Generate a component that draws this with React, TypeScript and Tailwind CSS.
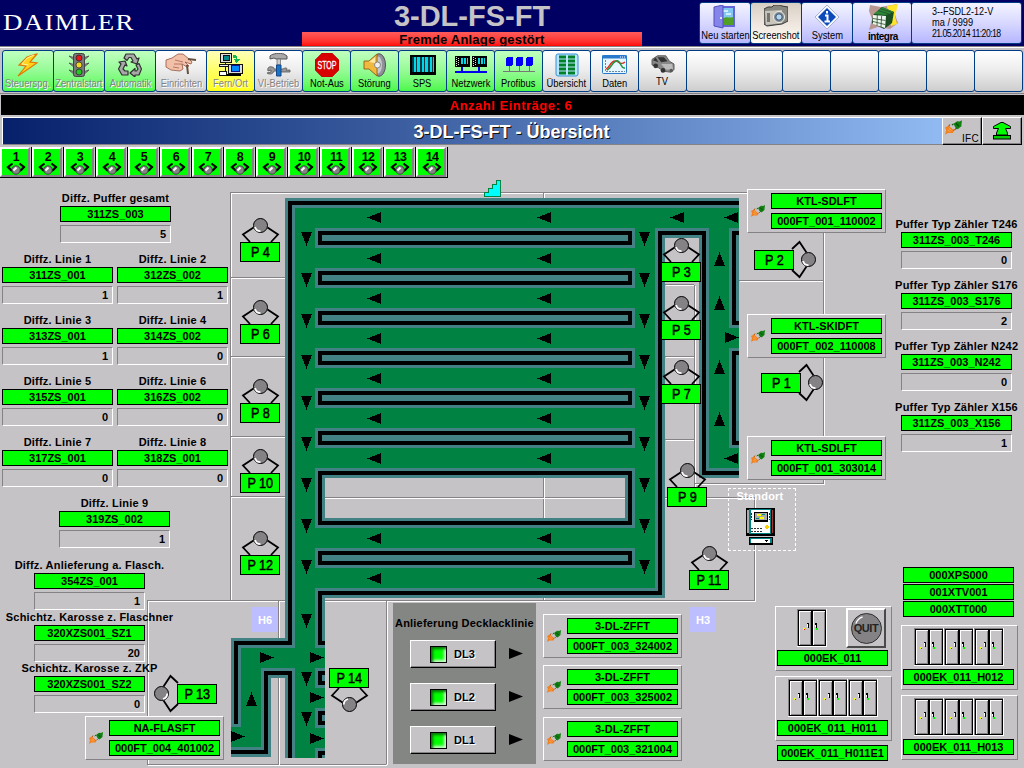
import React from "react";

const FONT = "font-['Liberation_Sans',Arial,sans-serif]";

/* ---------- small building blocks ---------- */

function Tag({ children, className = "" }: { children: React.ReactNode; className?: string }) {
  return (
    <div
      className={`h-4 w-[111px] shrink-0 whitespace-nowrap border border-black bg-[#00ff00] text-center text-[11px] font-bold leading-[14px] text-black ${className}`}
    >
      {children}
    </div>
  );
}

function Counter({ label, tag, value }: { label: string; tag: string; value: string }) {
  return (
    <div className="flex w-[111px] flex-col items-center">
      <div className="h-3.5 whitespace-nowrap text-[11px] font-bold leading-[12px] tracking-[0.2px]">{label}</div>
      <Tag>{tag}</Tag>
      <div className="mt-[3px] h-[18px] w-[111px] border border-b-white border-l-[#848284] border-r-white border-t-[#848284] pr-1 text-right text-[11px] font-bold leading-[17px]">
        {value}
      </div>
    </div>
  );
}

function Plug({ className = "h-3 w-3.5" }: { className?: string }) {
  return (
    <svg viewBox="0 0 14 12" className={className}>
      <path d="M0 12L1 8L0 6L3 4.5L7.5 8.5L6.5 10.5L2.5 10.5Z" fill="#f08020" />
      <path d="M3 5L4 3.5M7 8.5L8 7.5" stroke="#b85000" />
      <path d="M2 8L4.5 9.5M3 6.5L5.5 8.5" stroke="#ffb060" strokeWidth="0.7" />
      <path d="M7 3L10 0.8L12 1L14 0L13.5 4L13.5 5L10.5 7.5L8.5 6Z" fill="#108010" />
      <path d="M7 3L5.7 4M9.5 6.5L8.5 7.5M9 2.5L11.5 5" stroke="#064806" strokeWidth="0.9" />
    </svg>
  );
}

function LinkPanel({ name, code, className }: { name: string; code: string; className: string }) {
  return (
    <div
      className={`absolute flex h-11 w-[139px] items-center border border-b-[#848284] border-l-white border-r-[#848284] border-t-white bg-[#c6c3c6] pl-[3px] ${className}`}
    >
      <Plug />
      <div className="ml-1.5 flex flex-col gap-1">
        <Tag>{name}</Tag>
        <Tag>{code}</Tag>
      </div>
    </div>
  );
}

function Cabinet() {
  return (
    <svg viewBox="0 0 30 38" className="h-[38px] w-[30px]" shapeRendering="crispEdges">
      <rect width="30" height="38" fill="#fff" />
      <rect width="29" height="37" fill="#848284" />
      <rect x="1" y="1" width="28" height="36" fill="#000" />
      <rect x="2" y="2" width="12" height="34" fill="#fff" />
      <rect x="3" y="3" width="11" height="33" fill="#848284" />
      <rect x="3" y="3" width="10" height="32" fill="#c6c3c6" />
      <rect x="16" y="2" width="12" height="34" fill="#fff" />
      <rect x="17" y="3" width="11" height="33" fill="#848284" />
      <rect x="17" y="3" width="10" height="32" fill="#c6c3c6" />
      <path d="M10 14H12V19H11V15H10zM18 14H20V19H19V16H18z" fill="#000" />
      <path d="M10.5 15V18M18.5 16V18" stroke="#fff" />
      <rect x="6" y="19" width="2" height="2" fill="#ff0" />
      <rect x="7" y="20" width="1" height="1" fill="#f00" />
      <rect x="19" y="19" width="2" height="2" fill="#0f0" />
    </svg>
  );
}

function CabinetPanel({ count, name, className, quit }: { count: number; name: string; className: string; quit?: boolean }) {
  return (
    <div
      className={`absolute flex h-[65px] w-[117px] flex-col border border-b-[#848284] border-l-white border-r-[#848284] border-t-white pl-px ${className}`}
    >
      <div className={quit ? "flex h-[43px] items-start pl-5 pt-0.5" : "flex h-[43px] items-start pl-[11px] pt-0.5"}>
        {Array.from({ length: count }, (_, i) => (
          <Cabinet key={i} />
        ))}
        {quit && (
          <div className="-mt-px ml-[19px] flex size-10 items-center justify-center border-2 border-b-[#4a4a4a] border-l-white border-r-[#4a4a4a] border-t-white">
            <div className="relative flex size-[31px] items-center justify-center rounded-full border border-[#303030] bg-[#848284]">
              <svg viewBox="0 0 30 30" className="absolute inset-0 size-[29px]">
                <path d="M4 10C5 7 8 4 11 3" fill="none" stroke="#fff" strokeWidth="1.3" />
              </svg>
              <span className="text-[11px] font-bold leading-none tracking-[-0.4px] text-[#222]">QUIT</span>
            </div>
          </div>
        )}
      </div>
      <Tag>{name}</Tag>
    </div>
  );
}

/* ---------- header and toolbar icons ---------- */

const icons: Record<string, React.ReactNode> = {
  bolt: (
    <>
      <path d="M20 1L11 4L3 12L10 13L2 23L21 10L14 9L21 1Z" fill="#ffd21c" stroke="#e07808" strokeWidth="1.2" />
      <path d="M18 2L11 5L6 11L12 12" fill="none" stroke="#fff59a" />
    </>
  ),
  traffic: (
    <>
      <path d="M2 3L8 5V8ZM22 3L16 5V8ZM2 10L8 12V15ZM22 10L16 12V15ZM2 17L8 19V22ZM22 17L16 19V22Z" fill="#999" stroke="#555" strokeWidth=".9" />
      <rect x="6.5" y="0.5" width="11" height="23" rx="2" fill="#787878" stroke="#444" />
      <circle cx="12" cy="5" r="3" fill="#e81818" stroke="#222" strokeWidth=".7" />
      <circle cx="12" cy="12" r="3" fill="#f0d820" stroke="#222" strokeWidth=".7" />
      <circle cx="12" cy="19" r="3" fill="#20c820" stroke="#222" strokeWidth=".7" />
    </>
  ),
  recycle: (
    <g fill="#a8a8a8" stroke="#303030" strokeWidth="1.2" strokeLinejoin="round">
      <path d="M6 5L8 1H16L19 6L21 5L19 11L13 9L15 8L13 4.5H11L9 7.5Z" />
      <path d="M1 9L7 8L9 13L7 12L5 16L7 18H10V22H4L0.5 16L3 11Z" />
      <path d="M18 12L21 10.5L23.5 16L21 22H17V24L12 20L17 15.5V18H18.5L20 16Z" />
    </g>
  ),
  hand: (
    <>
      <path d="M0 7L6 5L12 1L17 1L23 6L26 9L25 11L19 9L23 13L21 14L16 11L17 16L14 18L5 17L0 14Z" fill="#f2bfa8" stroke="#945540" strokeWidth=".8" />
      <path d="M9 7L17 9M8 11L16 11M7 14L13 15" stroke="#a66450" strokeWidth=".8" />
      <path d="M22 6L30 7M21 12L22 21" stroke="#64503c" strokeWidth="2" />
    </>
  ),
  remote: (
    <g shapeRendering="crispEdges">
      <rect x="1" y="0" width="12" height="9" fill="#ddd" stroke="#000" />
      <rect x="4" y="2" width="6" height="5" fill="#008888" stroke="#000" />
      <path d="M6 10V20H2M6 14H12" fill="none" stroke="#000" />
      <rect x="0" y="11" width="12" height="3" fill="#eee" stroke="#000" />
      <rect x="0" y="19" width="7" height="4" fill="#fff" stroke="#000" />
      <rect x="9" y="11" width="15" height="10" fill="#ddd" stroke="#000" />
      <rect x="12" y="13" width="9" height="6" fill="#08f" stroke="#008" />
      <path d="M8 23H23" stroke="#000" strokeWidth="2" />
      <path d="M14 1L19 2V6H22L18 10L15 6H17V4H14Z" fill="#10b850" />
    </g>
  ),
  tools: (
    <>
      <path d="M1 18C0 15 2 13 5 14C7 14 7 15 7 16H16C19 14 21 15 19 17H23V19H14V18H7C6 21 3 22 0 20L4 19V17Z" fill="#999" stroke="#555" strokeWidth=".8" />
      <path d="M3 3C6 0 13 0 17 1L20 3V6H15L13 6H9L7 5L3 6Z" fill="#aaa" stroke="#555" />
      <path d="M10 6H13.5V12H10Z" fill="#ccc" stroke="#666" strokeWidth=".7" />
      <path d="M9.5 12H14V23H9.5Z" fill="#1974c8" stroke="#174888" />
    </>
  ),
  stop: (
    <>
      <path d="M7 0H17L24 7V17L17 24H7L0 17V7Z" fill="#d80000" stroke="#a00000" strokeWidth=".5" />
      <text x="12" y="15.7" textAnchor="middle" fontSize="10.5" fill="#fff" stroke="#fff" strokeWidth=".3" textLength="19" lengthAdjust="spacingAndGlyphs">STOP</text>
    </>
  ),
  speaker: (
    <>
      <ellipse cx="16" cy="12" rx="6.5" ry="11.3" fill="#909098" stroke="#505058" />
      <ellipse cx="15" cy="12" rx="4" ry="8.5" fill="#c6c8d0" />
      <path d="M1 8H6L14 1V23L6 16H1Z" fill="#f0b93e" stroke="#9a661c" />
      <path d="M6 9L12 4V10" fill="#ffe8a0" />
      <circle cx="14.5" cy="12" r="3" fill="#eee" stroke="#888" />
    </>
  ),
  plc: (
    <g shapeRendering="crispEdges">
      <rect x="0" y="1" width="26" height="20" fill="#000" />
      <rect x="2" y="3" width="22" height="15" fill="#00d8e8" />
      <path d="M2.5 3V18M6.5 3V18M10.5 3V18M14.5 3V18M18.5 3V18M22.5 3V18" stroke="#003840" />
      <path d="M3.5 3V18M11.5 3V18M19.5 3V18" stroke="#003840" />
    </g>
  ),
  network: (
    <g shapeRendering="crispEdges">
      <path d="M0 1H15V12H0ZM17 1H32V12H17Z" fill="#000" />
      <path d="M6 3H13V9H6ZM23 3H30V9H23Z" fill="#00d8e8" />
      <path d="M1.5 2V11M3.5 3V11M18.5 2V11M20.5 3V11" stroke="#ddd" strokeDasharray="1 1" />
      <path d="M8.5 3V9M11.5 3V9M25.5 3V9M28.5 3V9" stroke="#000" />
      <path d="M0 17H32M7 12V17M24 12V17" stroke="#0000f0" strokeWidth="2" />
    </g>
  ),
  profibus: (
    <g shapeRendering="crispEdges">
      <path d="M3 3L5 2H10V9L8 11H3ZM13 3L15 2H20V9L18 11H13ZM23 3L25 2H30V9L28 11H23Z" fill="#0000f8" />
      <path d="M6.5 11V16M16.5 11V16M26.5 11V16M0 16.5H32" stroke="#777" />
    </g>
  ),
  overview: (
    <>
      <rect x="1" y="1" width="22" height="22" rx="2" fill="#b9e5ff" stroke="#3090d8" />
      <path d="M4 4H11M4 8H11M4 12H11M4 16H11M4 20H11M13 4H20M13 8H20M13 12H20M13 16H20M13 20H20" stroke="#008028" strokeWidth="2.9" />
    </>
  ),
  chart: (
    <>
      <rect x="0.5" y="1.5" width="24" height="18" rx="1" fill="#e7f5ff" stroke="#2878cc" />
      <path d="M0 3H25" stroke="#2878cc" strokeWidth="3" />
      <path d="M18 3H23" stroke="#fff" strokeDasharray="1 1" />
      <path d="M3.5 6V17.5H23" fill="none" stroke="#6688a0" strokeDasharray="2 1" />
      <path d="M4 15C8 14 8 7 13 7S18 12 23 8" fill="none" stroke="#df3022" strokeWidth="1.5" />
      <path d="M5 16C9 15 9 9 14 7S18 15 23 14" fill="none" stroke="#20943f" strokeWidth="1.5" />
    </>
  ),
  car: (
    <>
      <path d="M1 6L7 2L16 2L20 8L25 11V17L22 20L14 19L8 15L1 12Z" fill="#888" stroke="#555" />
      <path d="M7 3.5L14 3.5L18 8L11 9ZM2 7L5 4L8 9Z" fill="#333" />
      <path d="M11 11L23 11L24 17L16 17Z" fill="#bbb" />
      <circle cx="5" cy="13" r="2.6" fill="#333" />
      <circle cx="13" cy="18" r="2.6" fill="#333" />
      <circle cx="22" cy="18" r="1.8" fill="#555" />
    </>
  ),
  door: (
    <>
      <rect x="8" y="2" width="13" height="19" fill="#80c8f0" stroke="#6466d8" strokeWidth="2" />
      <path d="M10 6H15M13 9H18" stroke="#e8f8ff" strokeWidth="1.5" />
      <path d="M9 14C14 10 16 14 20 12V20H9Z" fill="#50a028" />
      <path d="M1 2L10 0V23L1 21Z" fill="#8484ea" stroke="#5050bd" />
      <circle cx="8" cy="13" r="1" fill="#fff" />
    </>
  ),
  camera: (
    <>
      <path d="M0 4L4 2H8L10 0H16L18 1L24 2V16L18 19L3 21L0 19Z" fill="#888880" stroke="#38383a" />
      <path d="M1 6L18 5V18L2 20Z" fill="#c7c5bc" />
      <circle cx="15" cy="12" r="5.5" fill="#888" stroke="#eee" />
      <circle cx="15" cy="12" r="3.2" fill="#b8d4e8" stroke="#28557d" />
      <rect x="3" y="8" width="3" height="9" fill="#77736d" />
    </>
  ),
  info: (
    <>
      <path d="M12 0L24 12L12 24L0 12Z" fill="#f5f7ff" stroke="#aab5cc" />
      <path d="M12 3L21 12L12 21L3 12Z" fill="#0c49b9" />
      <path d="M12 6V8.5M10 10.5H12.5V16M9.5 16.5H15" fill="none" stroke="#fff" strokeWidth="2" />
    </>
  ),
  cube: (
    <>
      <path d="M1 1L12 3L28 0L25 8L29 19L21 25L9 23L0 26L3 15L0 7Z" fill="#b99790" />
      <path d="M18 2L29 0L26 12L28 20L22 22Z" fill="#ffe42a" />
      <path d="M4 11L13 3L25 8L23 19L15 25L3 19Z" fill="#174f20" />
      <path d="M4 11L17 12L16 24L4 20Z" fill="#eef4ee" />
      <path d="M5 10L13 3L25 8L17 11Z" fill="#2c8738" />
      <path d="M8.3 11L8 21.5M12.6 12L12 23M4 14.5L16.5 16.5M4 17.5L16 20.5M9 6.5L20 10M11 4.5L23 8.5M20 10L19 22M17 16L24 12" stroke="#244e2a" strokeWidth=".8" />
    </>
  ),
};

type Tone = "green" | "gray" | "yellow" | "lavender" | "beige";

const tones: Record<Tone, string> = {
  green: "bg-linear-to-b from-[#c0ffc0] via-[#94fb94] to-[#48f848]",
  gray: "bg-linear-to-b from-[#ffffff] via-[#ececec] to-[#cecece]",
  yellow: "bg-linear-to-b from-[#ffffb8] via-[#ffff60] to-[#ffff10]",
  lavender: "bg-linear-to-b from-[#f4f4ff] via-[#d8d8ff] to-[#b6b6ff]",
  beige: "bg-linear-to-b from-[#d8cec4] via-[#eee6de] to-[#fffaf4]",
};

function ToolButton({
  label = "",
  icon,
  box = "0 0 24 24",
  tone = "gray",
  disabled,
  size = "w-12",
  iconSize = "size-6",
}: {
  label?: string;
  icon?: string;
  box?: string;
  tone?: Tone;
  disabled?: boolean;
  size?: string;
  iconSize?: string;
}) {
  return (
    <button
      className={`-mr-px flex h-[42px] shrink-0 flex-col items-center rounded-[3px] border border-[#003c84] pt-0.5 ${size} ${tones[tone]}`}
    >
      {icon && (
        <svg viewBox={box} className={`shrink-0 ${iconSize}`}>
          {icons[icon]}
        </svg>
      )}
      {label && (
        <span
          className={`scale-x-[0.85] whitespace-nowrap text-[11px] leading-3 ${
            disabled ? "text-[#848284] [text-shadow:1px_1px_0_#fff]" : "text-black"
          }`}
        >
          {label}
        </span>
      )}
    </button>
  );
}

/* ---------- plant diagram ---------- */

const TEAL = "#428284";
const GREEN = "#008242";
const GREY = "#c6c3c6";

function Arrow({ x, y, dir }: { x: number; y: number; dir: "l" | "r" | "u" | "d" }) {
  const pts = {
    l: `${x},${y + 5.5} ${x + 14},${y} ${x + 14},${y + 11}`,
    r: `${x},${y} ${x},${y + 11} ${x + 14},${y + 5.5}`,
    u: `${x},${y + 14} ${x + 5.5},${y} ${x + 11},${y + 14}`,
    d: `${x},${y} ${x + 11},${y} ${x + 5.5},${y + 14}`,
  }[dir];
  return <polygon points={pts} fill="#000" />;
}

function Island({ y }: { y: number }) {
  return (
    <g>
      <rect x="315" y={y} width="320" height="20" fill={TEAL} />
      <rect x="320" y={y + 5} width="310" height="10" fill="none" stroke="#000" strokeWidth="4" />
    </g>
  );
}

/* Three-layer wall: teal edge, black core. */
function Wall({ d }: { d: string }) {
  return (
    <>
      <path d={d} fill="none" stroke={TEAL} strokeWidth="10" />
      <path d={d} fill="none" stroke="#000" strokeWidth="4" />
    </>
  );
}

function Worker({ x, y, turn, shine }: { x: number; y: number; turn: number; shine: number }) {
  return (
    <g transform={`translate(${x} ${y})`}>
      <g transform={`rotate(${turn})`}>
        <path d="M7 2L17.5 9L10.5 16.5M-7 2L-17.5 9L-10.5 16.5" fill="none" stroke="#000" strokeWidth="1.8" />
      </g>
      <circle r="7" fill="#848284" stroke="#000" />
      <path d="M-5.5 1.5A5.7 5.7 0 0 0 0 5.7" transform={`rotate(${shine})`} fill="none" stroke="#fff" strokeWidth="1.8" />
    </g>
  );
}

const frameLines = [
  "M230 192.5H747M230 277.5H286M230 356.5H286M230 436.5H286M230 496.5H286M147 600.5H755",
  "M230.5 192V600M147.5 600V764M147 764.5H386M278.5 600V764M386.5 601V764M543.5 192V600M754.5 498V601M325 497.5H755",
  "M739 280.5H824M823.5 232V483M695 483.5H824M694.5 285V497M665 284.5H694M665 356.5H694M665 439.5H694",
];

function Diagram() {
  return (
    <svg viewBox="0 178 1024 590" className="absolute inset-0 h-[590px] w-[1024px]">
      <g fill="none" shapeRendering="crispEdges">
        {frameLines.map((d, i) => (
          <path key={`w${i}`} d={d} stroke="#fff" transform="translate(1 1)" />
        ))}
        {frameLines.map((d, i) => (
          <path key={`g${i}`} d={d} stroke="#848284" />
        ))}
      </g>

      <g shapeRendering="crispEdges">
        <path d="M290 203H739V478H704V233H660V593H320V758H290V738H266V752H231V643H290Z" fill={GREEN} />
        <rect x="271" y="678" width="14" height="82" fill={GREY} />
        <path d="M278.5 678V764" stroke="#848284" />
        <path d="M279.5 678V765" stroke="#fff" />
        <rect x="315" y="643" width="10" height="115" fill={GREEN} />
        <Wall d="M739 203H290V643H236V722" />
        <path d="M231 724H241" stroke={TEAL} strokeWidth="6" />
        <path d="M236 718V724" stroke="#000" strokeWidth="4" />
        <path d="M231 727H261V747H231Z" fill={GREEN} />
        <path d="M241 673H261V727H241Z" fill={GREEN} />
        <Wall d="M231 752H266V673H290V758" />
        <Wall d="M325 643H320V593H660V233H704V473H739" />
        <path d="M739 233H734V323H739M739 353H734V443H739" fill="none" stroke={TEAL} strokeWidth="10" />
        <path d="M739 233H734V323H739M739 353H734V443H739" fill="none" stroke="#000" strokeWidth="4" />
        {[668, 708].map((y) => (
          <g key={y}>
            <rect x="315" y={y} width="10" height="20" fill={TEAL} />
            <path d={`M325 ${y + 5}H320V${y + 15}H325`} fill="none" stroke="#000" strokeWidth="4" />
          </g>
        ))}
        <rect x="315" y="748" width="10" height="10" fill={TEAL} />
        <path d="M325 753H320V758" fill="none" stroke="#000" strokeWidth="4" />
        {[228, 268, 308, 348, 388, 428, 548].map((y) => (
          <Island key={y} y={y} />
        ))}
        <rect x="315" y="468" width="320" height="60" fill={TEAL} />
        <rect x="320" y="473" width="310" height="50" fill={GREY} stroke={TEAL} strokeWidth="10" />
        <rect x="320" y="473" width="310" height="50" fill="none" stroke="#000" strokeWidth="4" />
        <path d="M325 497.5H625M543.5 478V518" stroke="#848284" />
        <path d="M325 498.5H625M544.5 478V518" stroke="#fff" />
        {[212, 253, 293, 333, 373, 413, 453, 533, 573].map((y) => (
          <g key={y}>
            <Arrow x={367} y={y} dir="l" />
            <Arrow x={537} y={y} dir="l" />
          </g>
        ))}
        {[232, 273, 314, 355, 396, 437, 478, 519, 560].map((y) => (
          <g key={y}>
            <Arrow x={301} y={y} dir="d" />
            <Arrow x={639} y={y} dir="d" />
          </g>
        ))}
        {[614, 672, 712].map((y) => (
          <Arrow key={y} x={301} y={y} dir="d" />
        ))}
        {[252, 296, 360, 412].map((y) => (
          <Arrow key={y} x={714} y={y} dir="u" />
        ))}
        <Arrow x={670} y={212} dir="l" />
        <Arrow x={724} y={212} dir="l" />
        <Arrow x={725} y={332} dir="r" />
        <Arrow x={724} y={453} dir="l" />
        <Arrow x={260} y={652} dir="r" />
        <Arrow x={310} y={652} dir="r" />
        <Arrow x={310} y={692} dir="r" />
        <Arrow x={310} y={733} dir="r" />
        <Arrow x={231} y={731} dir="r" />
        <Arrow x={246} y={692} dir="u" />
        <path d="M484.5 196.5V192.5H488.5V188.5H492.5V184.5H496.5V180.5H500.5V196.5Z" fill="#0ff" stroke="#008242" />
      </g>

      {[
        [260.5, 225.5],
        [260.5, 307.5],
        [260.5, 386.5],
        [260.5, 456.5],
        [260.5, 538.5],
        [681.5, 245.5],
        [681.5, 303.5],
        [681.5, 367.5],
        [687.5, 470.5],
        [709.5, 553.5],
      ].map(([x, y]) => (
        <Worker key={`${x}-${y}`} x={x} y={y} turn={0} shine={0} />
      ))}
      <Worker x={808.5} y={259.5} turn={90} shine={0} />
      <Worker x={815.5} y={382.5} turn={90} shine={0} />
      <Worker x={161.5} y={693.5} turn={-90} shine={-90} />
      <Worker x={349.5} y={704.5} turn={180} shine={90} />
    </svg>
  );
}

const stations: [string, string][] = [
  ["P 4", "left-[240px] top-[64px]"],
  ["P 6", "left-[240px] top-[146px]"],
  ["P 8", "left-[240px] top-[225px]"],
  ["P 10", "left-[240px] top-[295px]"],
  ["P 12", "left-[240px] top-[377px]"],
  ["P 3", "left-[661px] top-[84px]"],
  ["P 5", "left-[661px] top-[142px]"],
  ["P 7", "left-[661px] top-[206px]"],
  ["P 9", "left-[667px] top-[309px]"],
  ["P 11", "left-[689px] top-[392px]"],
  ["P 2", "left-[754px] top-[72px]"],
  ["P 1", "left-[761px] top-[195px]"],
  ["P 13", "left-[177px] top-[506px]"],
  ["P 14", "left-[329px] top-[490px]"],
];

function Terminal() {
  return (
    <svg viewBox="0 0 29 37" className="h-[37px] w-[29px]" shapeRendering="crispEdges">
      <rect width="29" height="28" fill="#000" />
      <rect x="1" y="2" width="2" height="23" fill="#aaa" />
      <rect x="26" y="2" width="1" height="23" fill="#b03030" />
      <rect x="3" y="1" width="22" height="25" fill="#008284" />
      <rect x="5" y="2" width="19" height="23" fill="#fff" />
      <rect x="8" y="4" width="14" height="10" fill="#000" />
      <rect x="9" y="5" width="12" height="7" fill="#aaa" />
      <path d="M11 7H15M14 10H18" stroke="#ff0" strokeWidth="2" />
      <path d="M16 6.5H19M10 10.5H13" stroke="#088" />
      <path d="M5.5 5V12M23.5 5V12" stroke="#800" strokeDasharray="2 1" />
      <path d="M5 20.5H17M5 23.5H17" stroke="#333" strokeDasharray="2 1" />
      <path d="M19 19H23M21 17V21" stroke="#fc0" strokeWidth="2" />
      <rect x="3" y="29" width="24" height="8" fill="#000" />
      <rect x="4" y="30" width="22" height="5" fill="#008284" />
      <rect x="5" y="31" width="19" height="4" fill="#fff" />
      <path d="M18 32H23L20 34Z" fill="#000" />
    </svg>
  );
}

function NumberButton({ n }: { n: number }) {
  return (
    <button className="flex h-[31px] w-8 shrink-0 border-b border-r border-black bg-[#c6c3c6]">
      <span className="flex h-[30px] w-[30px] flex-col items-center border-2 border-b-[#848284] border-l-white border-r-[#848284] border-t-white bg-[#00ff00] pt-[3px] pl-0.5">
        <span className="text-[12.5px] font-bold leading-[10px] tracking-[-0.6px]">{n}</span>
        <svg viewBox="0 0 20 13" className="h-[13px] w-5 shrink-0">
          <path d="M6.5 1.5L2 5L5 8L8 9.5M13.5 1.5L18 5L15 8L12 9.5" fill="none" stroke="#000" strokeWidth="2.2" />
          <circle cx="10" cy="8" r="4.2" fill="#848284" stroke="#333" strokeWidth=".8" />
          <path d="M7.5 8.5L10.5 5.5" stroke="#fff" strokeWidth="2" />
        </svg>
      </span>
    </button>
  );
}

/* ---------- page ---------- */

export default function App() {
  return (
    <div className={`flex h-[768px] w-[1024px] flex-col overflow-hidden bg-[#c6c3c6] text-black ${FONT}`}>
      <header className="flex h-[46px] shrink-0 bg-[#000063]">
        <div className="w-[302px] pl-[3px] pt-[9px] font-['Liberation_Serif',serif] text-[24px] leading-[27px] text-white">
          <span className="inline-block origin-left scale-x-[1.12] tracking-[1.2px]">DAIMLER</span>
        </div>
        <div className="flex w-[340px] flex-col items-center">
          <h1 className="h-8 text-[29px] font-bold leading-8 text-[#c6c3c6]">3-DL-FS-FT</h1>
          <div className="h-3.5 w-full bg-linear-to-b from-[#ff5a5a] to-[#ff0000] text-center text-[13px] font-bold leading-[15px] tracking-[0.2px]">
            Fremde Anlage gestört
          </div>
        </div>
        <div className="ml-[57px] flex pt-0.5">
          <ToolButton label="Neu starten" icon="door" tone="lavender" size="w-[52px]" />
          <ToolButton label="Screenshot" icon="camera" tone="beige" size="w-[52px]" />
          <ToolButton label="System" icon="info" tone="lavender" size="w-[52px]" />
          <div className="-mr-px flex h-[42px] w-[60px] flex-col items-center rounded-[3px] border border-[#003c84] bg-linear-to-b from-[#f4f4ff] via-[#d8d8ff] to-[#b6b6ff] pl-0.5">
            <svg viewBox="0 0 29 27" className="mt-px h-[27px] w-[29px] shrink-0">
              {icons.cube}
            </svg>
            <span className="text-[10px] font-bold leading-[11px] tracking-[-0.5px]">integra</span>
          </div>
          <div className="flex h-[42px] w-[111px] flex-col items-start whitespace-nowrap rounded-[3px] border border-[#003c84] bg-linear-to-b from-[#f4f4ff] via-[#d8d8ff] to-[#b6b6ff] pl-5 pt-[3px] text-[11px] leading-[11px]">
            <span className="origin-left scale-x-[0.82]">3--FSDL2-12-V</span>
            <span className="origin-left scale-x-[0.84]">ma / 9999</span>
            <span className="origin-left scale-x-[0.79] tracking-[-0.7px]">21.05.2014 11:20:18</span>
          </div>
        </div>
      </header>

      <nav className="flex h-12 shrink-0 border-b border-t border-b-[#848284] border-t-[#848284] pl-0.5 pt-[3px] shadow-[inset_0_1px_0_#fff]">
        <ToolButton label="Steuerspg." icon="bolt" tone="green" disabled size="w-[52px]" />
        <ToolButton label="Zentralstart" icon="traffic" tone="green" disabled size="w-[52px]" />
        <ToolButton label="Automatik" icon="recycle" tone="green" disabled size="w-[52px]" />
        <ToolButton label="Einrichten" icon="hand" box="0 0 30 24" iconSize="h-6 w-[34px]" disabled size="w-[52px]" />
        <ToolButton label="Fern/Ort" icon="remote" box="-1 -1 26 26" tone="yellow" disabled size="w-[49px]" />
        <ToolButton label="VI-Betrieb" icon="tools" disabled size="w-[49px]" />
        <ToolButton label="Not-Aus" icon="stop" tone="green" size="w-[49px]" />
        <ToolButton label="Störung" icon="speaker" tone="green" size="w-[49px]" />
        <ToolButton label="SPS" icon="plc" box="0 -1 26 24" iconSize="h-6 w-[26px]" tone="green" size="w-[49px]" />
        <ToolButton label="Netzwerk" icon="network" box="0 -2 32 24" iconSize="h-6 w-8" tone="green" size="w-[49px]" />
        <ToolButton label="Profibus" icon="profibus" box="0 -2 32 24" iconSize="h-6 w-8" tone="green" size="w-[49px]" />
        <ToolButton label="Übersicht" icon="overview" size="w-[49px]" />
        <ToolButton label="Daten" icon="chart" box="0 -1 25 24" iconSize="h-6 w-[25px]" size="w-[49px]" />
        <ToolButton label="TV" icon="car" box="0 -1 26 24" iconSize="h-[22px] w-[26px]" size="w-[49px]" />
        {Array.from({ length: 7 }, (_, i) => (
          <ToolButton key={i} size="w-[49px]" />
        ))}
      </nav>

      <div className="ml-px mt-px h-5 shrink-0 bg-black pr-[3px] text-center text-[13px] font-bold leading-[21px] tracking-[0.5px] text-[#ff0000]">
        Anzahl Einträge: 6
      </div>

      <div className="mx-0.5 mt-0.5 flex h-7 shrink-0">
        <div className="flex-1 border-b border-l border-t border-b-[#848284] border-l-white border-t-white bg-linear-to-r from-[#08206b] via-[#4669aa] to-[#91baf2] pl-[78px] text-center text-[18px] font-bold leading-7 text-white [text-shadow:1px_1px_0_#101010]">
          3-DL-FS-FT - Übersicht
        </div>
        <button className="flex h-7 w-10 items-start border border-b-black border-l-white border-r-black border-t-white shadow-[inset_-1px_-1px_0_#848284]">
          <Plug className="ml-0.5 mt-0.5 h-[15px] w-[17px] shrink-0" />
          <span className="mt-[15px] text-[10px] leading-[11px] tracking-[0.3px]">IFC</span>
        </button>
        <button className="flex h-7 w-10 items-center justify-center border border-b-black border-l-white border-r-black border-t-white shadow-[inset_-1px_-1px_0_#848284]">
          <svg viewBox="0 0 20 20" className="size-5 shrink-0">
            <path d="M9 1.5H11L18.5 5.5V7.5H13.5L15.5 12V14H4.5V12L6.5 7.5H1.5V5.5Z" fill="#0f0" stroke="#000" />
            <rect x="1.5" y="14.5" width="17" height="3.5" fill="#00d000" stroke="#000" />
          </svg>
        </button>
      </div>

      <nav className="mt-0.5 flex h-[31px] shrink-0">
        {Array.from({ length: 14 }, (_, i) => (
          <NumberButton key={i} n={i + 1} />
        ))}
      </nav>

      <main className="relative flex h-[590px] w-[1024px] justify-between">
        <Diagram />

        <aside className="relative flex w-[230px] flex-col pl-0.5 pt-3.5">
          <div className="ml-[58px]">
            <Counter label="Diffz. Puffer gesamt" tag="311ZS_003" value="5" />
          </div>
          <div className="mt-2.5 grid grid-cols-[111px_111px] gap-x-1 gap-y-2.5">
            <Counter label="Diffz. Linie 1" tag="311ZS_001" value="1" />
            <Counter label="Diffz. Linie 2" tag="312ZS_002" value="1" />
            <Counter label="Diffz. Linie 3" tag="313ZS_001" value="1" />
            <Counter label="Diffz. Linie 4" tag="314ZS_002" value="0" />
            <Counter label="Diffz. Linie 5" tag="315ZS_001" value="0" />
            <Counter label="Diffz. Linie 6" tag="316ZS_002" value="0" />
            <Counter label="Diffz. Linie 7" tag="317ZS_001" value="0" />
            <Counter label="Diffz. Linie 8" tag="318ZS_001" value="0" />
          </div>
          <div className="ml-[57px] mt-2.5">
            <Counter label="Diffz. Linie 9" tag="319ZS_002" value="1" />
          </div>
          <div className="ml-8 mt-[11px]">
            <Counter label="Diffz. Anlieferung a. Flasch." tag="354ZS_001" value="1" />
          </div>
          <div className="ml-8 mt-px">
            <Counter label="Schichtz. Karosse z. Flaschner" tag="320XZS001_SZ1" value="20" />
          </div>
          <div className="ml-8">
            <Counter label="Schichtz. Karosse z. ZKP" tag="320XZS001_SZ2" value="0" />
          </div>
        </aside>

        <aside className="relative flex w-[123px] flex-col gap-2.5 pt-10">
          <Counter label="Puffer Typ Zähler T246" tag="311ZS_003_T246" value="0" />
          <Counter label="Puffer Typ Zähler S176" tag="311ZS_003_S176" value="2" />
          <Counter label="Puffer Typ Zähler N242" tag="311ZS_003_N242" value="0" />
          <Counter label="Puffer Typ Zähler X156" tag="311ZS_003_X156" value="1" />
          <div className="ml-0.5 mt-[105px] flex flex-col gap-px">
            <Tag>000XPS000</Tag>
            <Tag>001XTV001</Tag>
            <Tag>000XTT000</Tag>
          </div>
        </aside>

        {stations.map(([name, pos]) => (
          <div
            key={name}
            className={`absolute h-5 w-10 border border-black bg-[#00ff00] text-center text-[14px] leading-[19px] ${pos}`}
          >
            <span className="inline-block scale-x-[0.9] [-webkit-text-stroke:0.5px_black]">{name}</span>
          </div>
        ))}

        <LinkPanel name="KTL-SDLFT" code="000FT_001_110002" className="left-[747px] top-[11px]" />
        <LinkPanel name="KTL-SKIDFT" code="000FT_002_110008" className="left-[747px] top-[136px]" />
        <LinkPanel name="KTL-SDLFT" code="000FT_001_303014" className="left-[747px] top-[258px]" />
        <LinkPanel name="NA-FLASFT" code="000FT_004_401002" className="left-[85px] top-[538px]" />
        <LinkPanel name="3-DL-ZFFT" code="000FT_003_324002" className="left-[543px] top-[436px]" />
        <LinkPanel name="3-DL-ZFFT" code="000FT_003_325002" className="left-[543px] top-[487px]" />
        <LinkPanel name="3-DL-ZFFT" code="000FT_003_321004" className="left-[543px] top-[539px]" />

        <div className="absolute left-[252px] top-[429px] h-[25px] w-[26px] bg-[#bdbeff] text-center text-[11px] font-bold leading-[26px] text-white">
          H6
        </div>
        <div className="absolute left-[690px] top-[429px] h-[25px] w-[26px] bg-[#bdbeff] text-center text-[11px] font-bold leading-[26px] text-white">
          H3
        </div>

        <div className="absolute left-[728px] top-[310px] flex h-[63px] w-[68px] flex-col items-center border border-dashed border-white pr-1">
          <span className="text-[11px] font-bold leading-[15px] tracking-[0.2px] text-white">Standort</span>
          <div className="mt-1 bg-[#c6c3c6]">
            <Terminal />
          </div>
        </div>

        <section className="absolute left-[393px] top-[425px] flex h-[161px] w-[143px] flex-col bg-[#848684]">
          <h2 className="mt-[13px] h-3.5 whitespace-nowrap text-center text-[11px] font-bold leading-[14px] tracking-[0.2px]">
            Anlieferung Decklacklinie
          </h2>
          <div className="mt-2.5 flex flex-col gap-[15px] pl-[17px]">
            {["DL3", "DL2", "DL1"].map((name) => (
              <div key={name} className="flex items-center">
                <button className="flex h-7 w-[86px] items-center border border-b-black border-l-white border-r-black border-t-white bg-[#c6c3c6] pl-[19px] shadow-[inset_-1px_-1px_0_#848284]">
                  <span className="size-[17px] border border-black bg-[#00ff00] shadow-[inset_2px_2px_3px_#087008,inset_-2px_-2px_3px_#d8ffd8]" />
                  <span className="-mt-px ml-[7px] text-[11px] font-bold leading-3 [text-shadow:1px_1px_0_#fff]">{name}</span>
                </button>
                <svg viewBox="0 0 14 11" className="-mt-0.5 ml-[13px] h-[11px] w-3.5">
                  <path d="M0 0V11L14 5.5Z" />
                </svg>
              </div>
            ))}
          </div>
        </section>

        <CabinetPanel count={1} quit name="000EK_011" className="left-[775px] top-[428px]" />
        <CabinetPanel count={3} name="000EK_011_H011" className="left-[775px] top-[498px]" />
        <CabinetPanel count={3} name="000EK_011_H012" className="left-[901px] top-[447px]" />
        <CabinetPanel count={3} name="000EK_011_H013" className="left-[901px] top-[517px]" />
        <Tag className="absolute left-[777px] top-[567px]">000EK_011_H011E1</Tag>
      </main>
    </div>
  );
}
